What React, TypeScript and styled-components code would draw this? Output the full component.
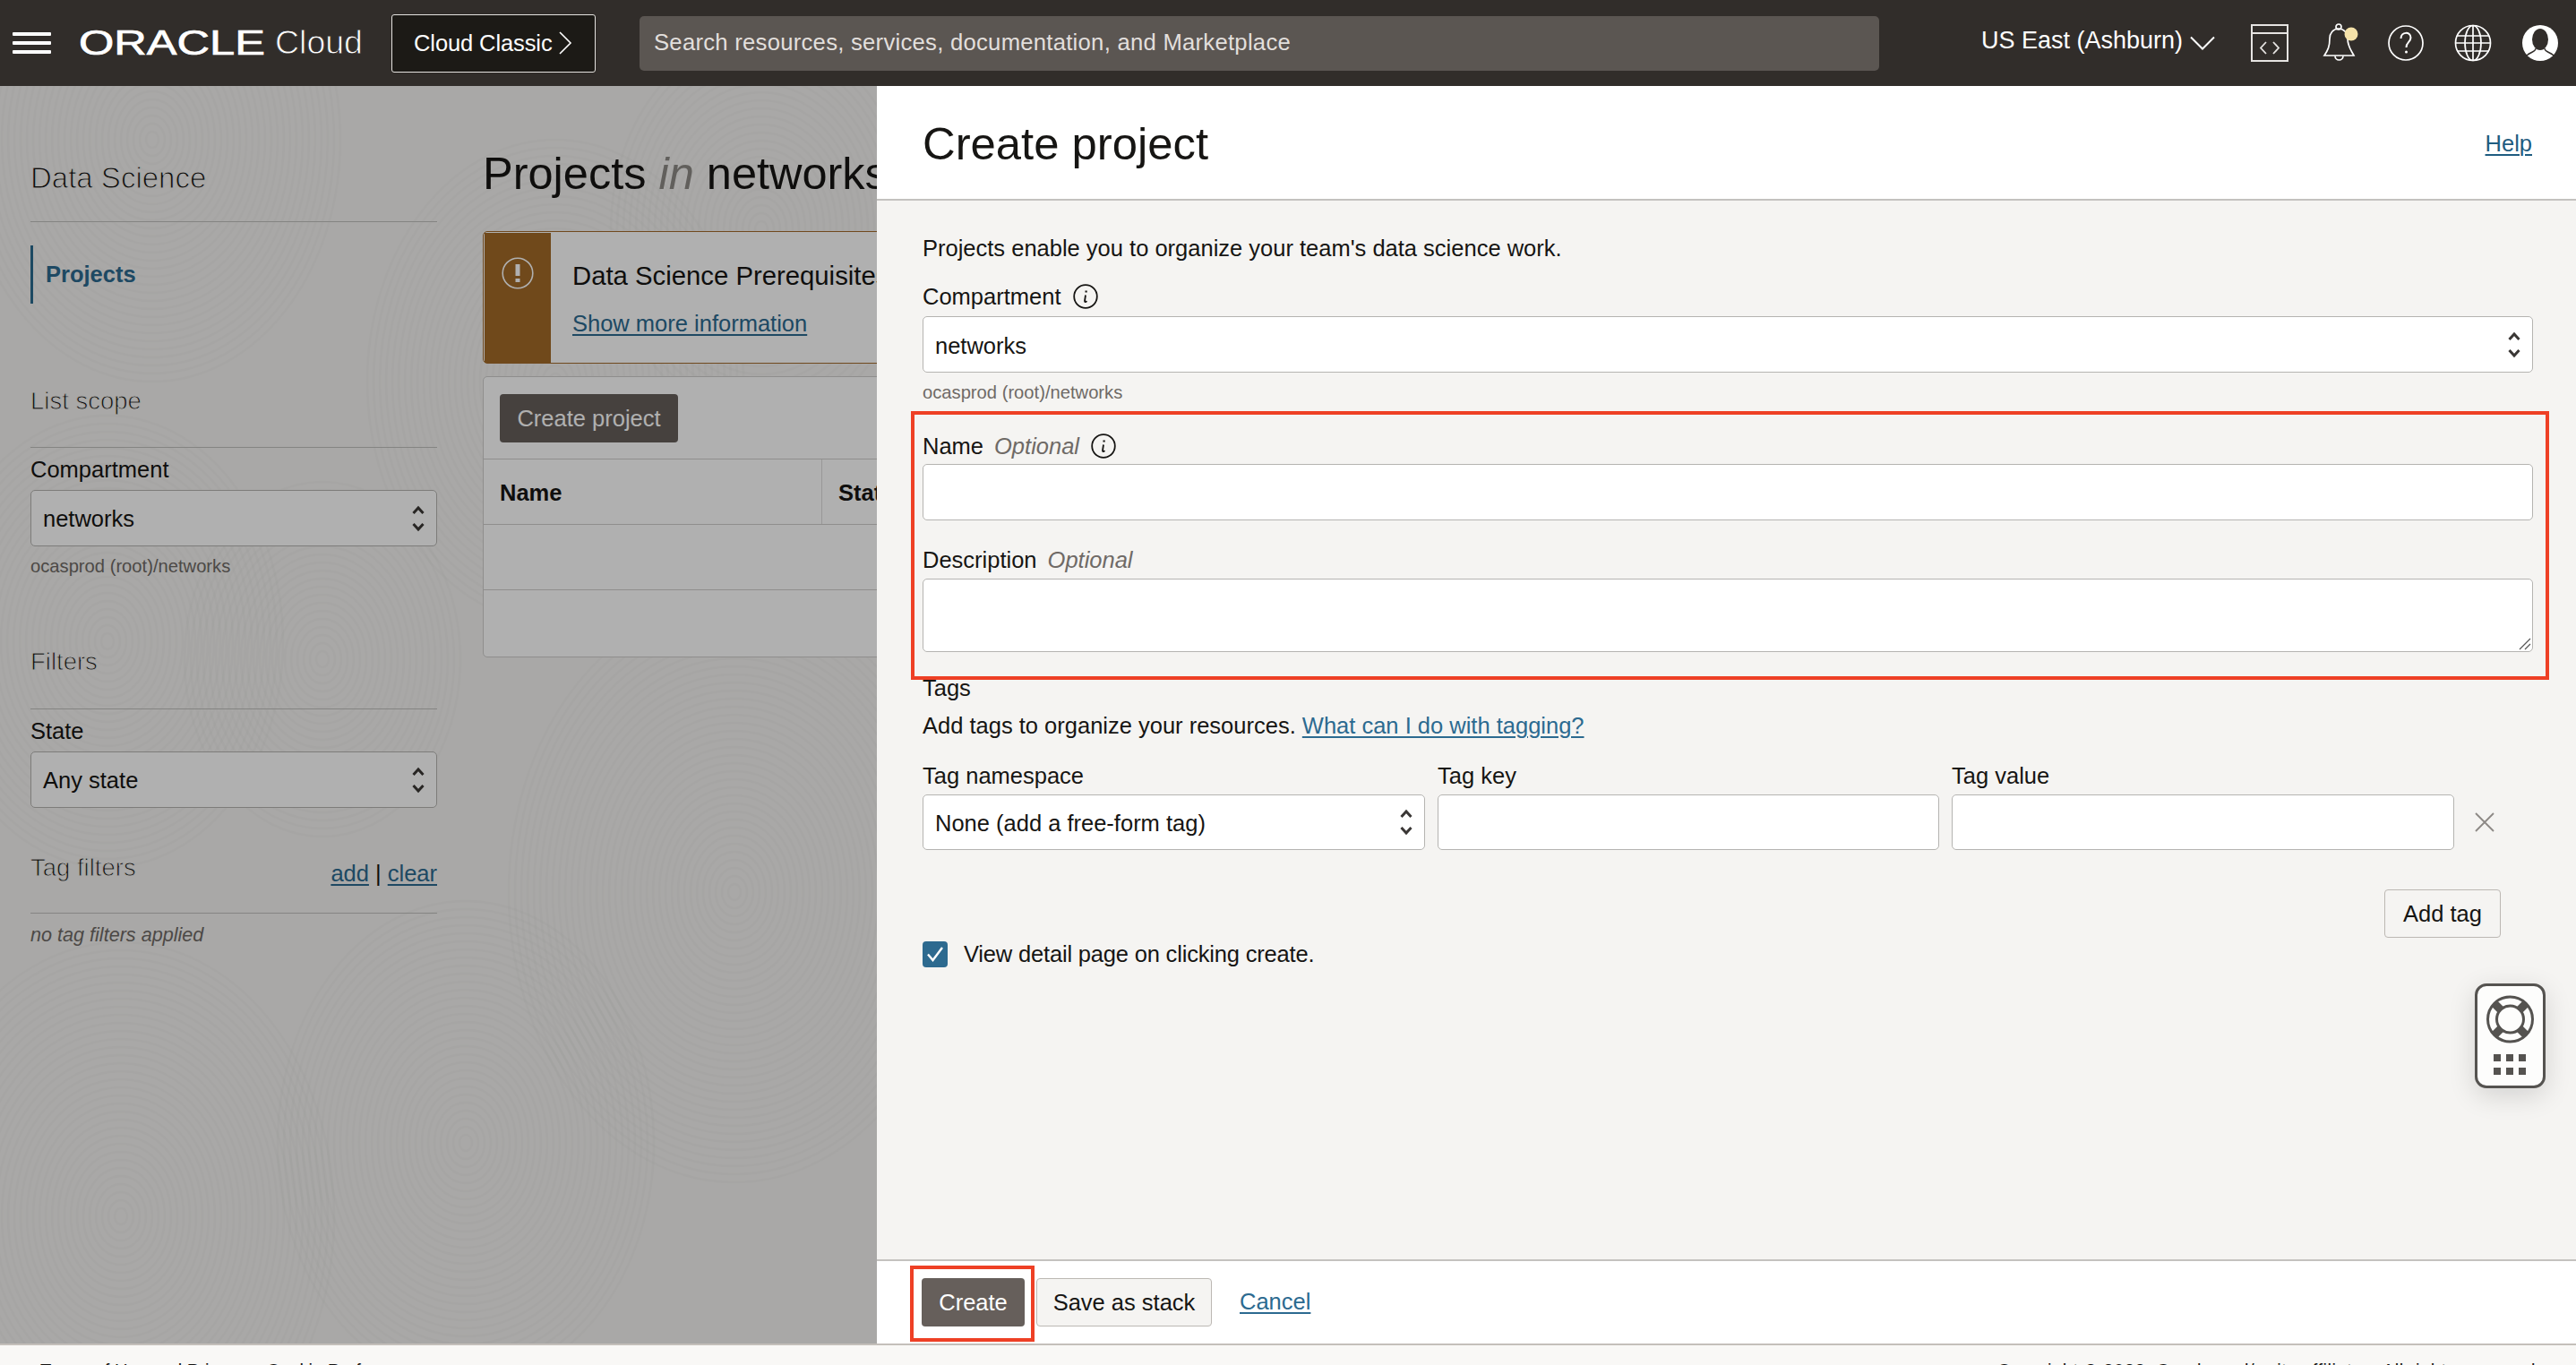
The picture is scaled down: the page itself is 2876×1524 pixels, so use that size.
import React from "react";
import styled, { createGlobalStyle } from "styled-components";

const Global = createGlobalStyle`
  html, body { margin: 0; padding: 0; width: 2876px; height: 1524px; overflow: hidden; }
  body { font-family: "Liberation Sans", Arial, sans-serif; font-size: 25.5px; color: #161513; }
  * { box-sizing: border-box; }
`;

const Shell = styled.div`
  position: relative;
  width: 2876px;
  height: 1524px;
  display: flex;
  flex-direction: column;
  overflow: hidden;
`;

/* ---------- top bar ---------- */
const TopBar = styled.header`
  flex: 0 0 96px;
  background: #312d2a;
  display: flex;
  align-items: center;
  color: #fff;
  padding-left: 14px;
`;
const Burger = styled.div`
  width: 43px;
  display: flex;
  flex-direction: column;
  gap: 6px;
  margin-top: -1px;
  span { display: block; height: 4px; background: #fff; border-radius: 1px; }
`;
const LogoWrap = styled.div`
  margin-left: 31px;
  display: flex;
  align-items: center;
  width: 349px;
`;
const LogoMark = styled.span`
  display: inline-block;
  width: 219px;
  font-size: 38px;
  line-height: 40px;
  font-weight: 400;
  transform: scaleX(1.33);
  transform-origin: left center;
  -webkit-text-stroke: 0.7px #fff;
  letter-spacing: 0;
`;
const LogoCloud = styled.span`
  font-size: 37.5px;
  line-height: 40px;
  margin-top: -2px;
  -webkit-text-stroke: 0.9px #312d2a;
`;
const ClassicButton = styled.div`
  width: 228px;
  height: 65px;
  background: #1c1a16;
  border: 1px solid #e4e2df;
  border-radius: 3px;
  display: flex;
  align-items: center;
  padding-left: 24px;
  gap: 6px;
  font-size: 25.5px;
  letter-spacing: -0.1px;
  line-height: 58px;
`;
const SearchBox = styled.div`
  margin-left: 49px;
  width: 1384px;
  height: 61px;
  background: #5b5652;
  border-radius: 5px;
  padding: 0 0 2px 16px;
  display: flex;
  align-items: center;
  color: #e2dfdc;
  font-size: 25.67px;
  letter-spacing: 0.26px;
`;
const RegionPicker = styled.div`
  margin-left: 114px;
  display: flex;
  align-items: center;
  gap: 8px;
  font-size: 27px;
  width: 301px;
  span { margin-top: -5px; }
`;
const TopIcon = styled.svg`
  flex: none;
  display: block;
`;
const BellIcon = styled(TopIcon)`
  margin-left: 4px;
  margin-right: -1px;
`;
const IconRow = styled.div`
  display: flex;
  align-items: center;
  gap: 34px;
`;

/* ---------- page under the scrim ---------- */
const Stage = styled.div`
  position: relative;
  flex: 0 0 1404px;
  background: #f5f4f2;
  display: flex;
  overflow: hidden;
`;
const Texture = styled.svg`
  position: absolute;
  left: 0;
  top: 0;
`;
const Sidebar = styled.aside`
  position: relative;
  width: 454px;
  margin-left: 34px;
  flex: none;
`;
const SideTitle = styled.div`
  margin-top: 83px;
  height: 40px;
  line-height: 40px;
  font-size: 33px;
  color: #161412;
  -webkit-text-stroke: 1px #f5f4f2;
`;
const SideSection = styled.div<{ $top: number }>`
  margin-top: ${(p) => p.$top}px;
  height: 34px;
  line-height: 34px;
  font-size: 27.5px;
  color: #161412;
  -webkit-text-stroke: 0.9px #f5f4f2;
  display: flex;
  justify-content: space-between;
`;
const Rule = styled.div<{ $top: number }>`
  margin-top: ${(p) => p.$top}px;
  height: 1px;
  background: #c0bfbd;
`;
const NavItem = styled.div`
  margin-top: 26px;
  height: 65px;
  border-left: 3px solid #2b6a8f;
  padding-left: 14px;
  display: flex;
  align-items: center;
  font-weight: 700;
  color: #2c6a90;
  font-size: 25.5px;
`;
const SideLabel = styled.div`
  height: 30px;
  line-height: 30px;
  margin-top: 9px;
  margin-bottom: 8px;
  font-size: 25.5px;
`;
const SelectBox = styled.div`
  height: 63px;
  border: 1px solid #b5b4b1;
  border-radius: 5px;
  background: #fff;
  display: flex;
  align-items: center;
  justify-content: space-between;
  padding: 0 12px 0 13px;
  font-size: 25.5px;
  line-height: 30px;
`;
const Helper = styled.div<{ $top: number }>`
  margin-top: ${(p) => p.$top}px;
  height: 24px;
  line-height: 24px;
  font-size: 20.2px;
  color: #6f6a66;
`;
const ItalicHelper = styled(Helper)`
  font-style: italic;
  font-size: 21.6px;
`;
const Link = styled.a`
  color: #2c6a90;
  text-decoration: underline;
  text-decoration-thickness: 2px;
  text-underline-offset: 3px;
`;
const TagActions = styled.span`
  font-size: 25.5px;
  margin-top: 6px;
  -webkit-text-stroke: 0;
  color: #161513;
`;

const Main = styled.main`
  position: relative;
  margin-left: 51px;
  flex: none;
  width: 1500px;
`;
const PageTitle = styled.h1`
  margin: 0;
  margin-top: 68px;
  height: 60px;
  line-height: 60px;
  font-weight: 400;
  font-size: 50.5px;
  white-space: nowrap;
  em { color: #8d8a86; font-style: italic; }
`;
const Banner = styled.div`
  margin-top: 34px;
  height: 148px;
  background: #fff;
  border: 1px solid #a36a2c;
  border-radius: 5px;
  padding: 1px 0 0 1px;
  display: flex;
`;
const BannerStripe = styled.div`
  width: 74px;
  background: #a26a28;
  display: flex;
  justify-content: center;
  padding-top: 27px;
`;
const BannerText = styled.div`
  padding-left: 24px;
  padding-top: 31px;
`;
const BannerTitle = styled.div`
  font-size: 29.3px;
  line-height: 34px;
`;
const BannerLink = styled(Link)`
  display: block;
  margin-top: 21px;
  font-size: 25.5px;
  line-height: 30px;
`;
const TableCard = styled.div`
  margin-top: 14px;
  height: 314px;
  background: #fff;
  border: 1px solid #cfcecc;
  border-radius: 5px;
`;
const CardToolbar = styled.div`
  height: 92px;
  padding: 19px 0 0 18px;
  border-bottom: 1px solid #cfcecc;
`;
const DarkButton = styled.div<{ $w: number; $h: number }>`
  width: ${(p) => p.$w}px;
  height: ${(p) => p.$h}px;
  background: #665f5b;
  color: #fff;
  border-radius: 4px;
  display: flex;
  align-items: center;
  justify-content: center;
  font-size: 25.5px;
`;
const HeadRow = styled.div`
  height: 73px;
  border-bottom: 1px solid #cfcecc;
  display: flex;
  font-weight: 700;
`;
const HeadCell = styled.div<{ $w: number }>`
  width: ${(p) => p.$w}px;
  padding: 2px 0 0 18px;
  display: flex;
  align-items: center;
  border-right: 1px solid #dedddb;
`;
const EmptyRow = styled.div`
  height: 73px;
  border-bottom: 1px solid #cfcecc;
`;

const Scrim = styled.div`
  position: absolute;
  inset: 0;
  background: rgba(0, 0, 0, 0.31);
`;

/* ---------- drawer ---------- */
const Drawer = styled.section`
  position: absolute;
  left: 979px;
  top: 0;
  bottom: 0;
  right: 0;
  display: flex;
  flex-direction: column;
  background: #f5f4f2;
`;
const DrawerHead = styled.div`
  flex: 0 0 128px;
  background: #fff;
  border-bottom: 2px solid #c4c2bf;
  padding: 0 49px 0 51px;
  display: flex;
  align-items: center;
  justify-content: space-between;
`;
const DrawerTitle = styled.h2`
  margin: 0;
  font-weight: 400;
  font-size: 50.8px;
  margin-top: 2px;
`;
const HelpLink = styled(Link)`
  color: #1f5c80;
  margin-top: 3px;
`;
const DrawerBody = styled.div`
  flex: 1;
  padding: 38px 48px 0 51px;
`;
const Line = styled.div<{ $top: number }>`
  margin-top: ${(p) => p.$top}px;
  height: 30px;
  line-height: 30px;
  display: flex;
  align-items: center;
  white-space: pre;
`;
const Optional = styled.i`
  color: #6f6a66;
  margin-left: 12px;
`;
const InfoIcon = styled.svg<{ $gap: number }>`
  margin-left: ${(p) => p.$gap}px;
  flex: none;
`;
const FieldBox = styled.div<{ $top: number; $h: number }>`
  position: relative;
  margin-top: ${(p) => p.$top}px;
  height: ${(p) => p.$h}px;
  background: #fff;
  border: 1px solid #b5b4b1;
  border-radius: 5px;
`;
const SelectField = styled(SelectBox)<{ $top: number; $h: number }>`
  margin-top: ${(p) => p.$top}px;
  height: ${(p) => p.$h}px;
  & > span { margin-top: 2px; }
`;
const Grip = styled.svg`
  position: absolute;
  right: 1px;
  bottom: 1px;
`;
const TagGrid = styled.div`
  margin-top: 26px;
  display: grid;
  grid-template-columns: 561px 560px 561px 1fr;
  column-gap: 14px;
  row-gap: 6px;
  align-items: center;
`;
const TagLabel = styled.div`
  height: 30px;
  line-height: 30px;
`;
const TagBox = styled.div`
  height: 62px;
  background: #fff;
  border: 1px solid #b5b4b1;
  border-radius: 5px;
`;
const RemoveIcon = styled.svg`
  margin-left: 8px;
`;
const AddTagRow = styled.div`
  margin-top: 44px;
  padding-right: 36px;
  display: flex;
  justify-content: flex-end;
`;
const GhostButton = styled.div<{ $w: number; $h: number }>`
  width: ${(p) => p.$w}px;
  height: ${(p) => p.$h}px;
  border: 1px solid #bcb8b3;
  border-radius: 4px;
  background: #f5f4f2;
  display: flex;
  align-items: center;
  justify-content: center;
  font-size: 25.5px;
`;
const CheckRow = styled.div`
  margin-top: 3px;
  height: 30px;
  display: flex;
  align-items: center;
  gap: 18px;
  letter-spacing: -0.18px;
`;
const CheckBox = styled.div`
  width: 28px;
  height: 29px;
  background: #2d6a8f;
  border-radius: 4px;
  display: flex;
  align-items: center;
  justify-content: center;
`;
const DrawerFoot = styled.div`
  flex: 0 0 94px;
  background: #fff;
  border-top: 2px solid #c4c2bf;
  padding: 19px 0 0 50px;
  display: flex;
  align-items: flex-start;
`;
const CancelLink = styled(Link)`
  margin: 12px 0 0 31px;
`;
const SaveButton = styled(GhostButton)`
  margin-left: 13px;
`;
const HelpWidget = styled.div`
  position: absolute;
  left: 2763px;
  top: 1098px;
  width: 79px;
  height: 117px;
  background: #fdfdfc;
  border: 3px solid #555350;
  border-radius: 13px;
  box-shadow: 0 8px 30px rgba(0, 0, 0, 0.14);
`;
const WidgetArt = styled.svg`
  display: block;
`;
const Annotation = styled.div<{ $l: number; $t: number; $w: number; $h: number }>`
  position: absolute;
  left: ${(p) => p.$l}px;
  top: ${(p) => p.$t}px;
  width: ${(p) => p.$w}px;
  height: ${(p) => p.$h}px;
  border: 4px solid #ee4025;
  pointer-events: none;
`;

/* ---------- page footer ---------- */
const PageFoot = styled.footer`
  flex: 0 0 24px;
  background: #f9f8f6;
  border-top: 2px solid #c4bfba;
  padding: 16px 39px 0 45px;
  display: flex;
  justify-content: space-between;
  font-size: 20.2px;
  line-height: 24px;
  white-space: pre;
  color: #161513;
  overflow: hidden;
`;
const Copyright = styled.span`
  letter-spacing: 0.5px;
`;

/* ---------- drawings ---------- */
const Updown = () => (
  <svg width="16" height="32" viewBox="0 0 16 32" fill="none" stroke="#3a3735" strokeWidth="3">
    <path d="M2.500 10 8 4l5.500 6" />
    <path d="M2.500 22 8 28l5.500-6" />
  </svg>
);
const Info = ({ gap }: { gap: number }) => (
  <InfoIcon $gap={gap} width="28" height="28" viewBox="0 0 28 28" fill="none" stroke="#161513">
    <circle cx="14" cy="14" r="12.800" strokeWidth="1.800" />
    <path d="M14.600 7.500v2" strokeWidth="2.200" />
    <path d="M14 12.500l-1 6.500c-.2 1.300 1 1.700 2.400.2" strokeWidth="1.800" />
  </InfoIcon>
);

const swirls = [
  { x: 170, y: 60, n: 30 },
  { x: 620, y: 330, n: 30 },
  { x: 120, y: 620, n: 28 },
  { x: 360, y: 640, n: 22 },
  { x: 820, y: 900, n: 36 },
  { x: 135, y: 1262, n: 34 },
  { x: 520, y: 1180, n: 30 },
  { x: 850, y: 160, n: 24 },
];
const Fingerprint = () => (
  <Texture width="979" height="1404" fill="none" stroke="#000" strokeOpacity="0.014" strokeWidth="3">
    {swirls.map((s) =>
      Array.from({ length: s.n }, (_, i) => (
        <ellipse key={`${s.x}-${i}`} cx={s.x} cy={s.y} rx={(i + 1) * 7} ry={(i + 1) * 9} />
      ))
    )}
  </Texture>
);

const Lifebuoy = () => (
  <WidgetArt width="73" height="110" viewBox="0 0 73 110">
    <circle cx="36.500" cy="37" r="25" fill="none" stroke="#555350" strokeWidth="3" />
    <circle cx="36.500" cy="37" r="15" fill="none" stroke="#555350" strokeWidth="3" />
    <g stroke="#555350" strokeWidth="9">
      <path d="M19 19.500 26 26.500M54 19.500 47 26.500M19 54.500 26 47.500M54 54.500 47 47.500" />
    </g>
    {[18, 32, 46].map((x) =>
      [76, 91].map((y) => <rect key={`${x}${y}`} x={x} y={y} width="8" height="8" fill="#555350" />)
    )}
  </WidgetArt>
);

export default function App() {
  return (
    <Shell>
      <Global />
      <TopBar>
        <Burger>
          <span />
          <span />
          <span />
        </Burger>
        <LogoWrap>
          <LogoMark>ORACLE</LogoMark>
          <LogoCloud>Cloud</LogoCloud>
        </LogoWrap>
        <ClassicButton>
          Cloud Classic
          <TopIcon width="16" height="26" viewBox="0 0 16 26" fill="none" stroke="#fff" strokeWidth="1.600">
            <path d="M2 1l12 12L2 25" />
          </TopIcon>
        </ClassicButton>
        <SearchBox>Search resources, services, documentation, and Marketplace</SearchBox>
        <RegionPicker>
          <span>US East (Ashburn)</span>
          <TopIcon width="28" height="16" viewBox="0 0 28 16" fill="none" stroke="#fff" strokeWidth="2">
            <path d="M1 1.500l13 13 13-13" />
          </TopIcon>
        </RegionPicker>
        <IconRow>
          <TopIcon width="42" height="42" viewBox="0 0 42 42" fill="none" stroke="#e6e4e2" strokeWidth="2">
            <rect x="1" y="1" width="40" height="40" />
            <path d="M1 10h40" />
            <path d="M17 20l-6 6.500 6 6.500M25 20l6 6.500-6 6.500" strokeWidth="1.800" />
          </TopIcon>
          <BellIcon width="40" height="44" viewBox="0 0 40 44" fill="none" stroke="#fff" strokeWidth="1.700">
            <path d="M2 36c4-6 6-10 6-19 0-6 4-11 10-11s10 5 10 11c0 9 4 13 7 19z" />
            <circle cx="18" cy="4" r="3" />
            <path d="M14 36.500a4.500 4.500 0 0 0 9 0" />
            <ellipse cx="32" cy="12" rx="7.500" ry="7.500" fill="#f5e2a9" stroke="none" />
          </BellIcon>
          <TopIcon width="40" height="42" viewBox="0 0 40 42" fill="none" stroke="#fff" strokeWidth="1.700">
            <circle cx="20" cy="21" r="19" />
            <path d="M14.500 16c0-8 11-8 11-1 0 5-5 5-5 11" strokeWidth="2" />
            <circle cx="20.500" cy="31" r="1.500" fill="#fff" stroke="none" />
          </TopIcon>
          <TopIcon width="42" height="42" viewBox="0 0 42 42" fill="none" stroke="#fff" strokeWidth="1.700">
            <circle cx="21" cy="21" r="19.500" />
            <ellipse cx="21" cy="21" rx="9" ry="19.500" />
            <path d="M21 1.500v39M3 13h36M1.500 21h39M3 30h36" />
          </TopIcon>
          <TopIcon width="40" height="42" viewBox="0 0 40 42">
            <circle cx="20" cy="21" r="20" fill="#fff" />
            <ellipse cx="20" cy="17" rx="9" ry="12" fill="#312d2a" />
            <path d="M15 27c0 4-6 4-10 8M25 27c0 4 6 4 10 8" fill="none" stroke="#312d2a" strokeWidth="1.500" />
          </TopIcon>
        </IconRow>
      </TopBar>

      <Stage>
        <Fingerprint />
        <Sidebar>
          <SideTitle>Data Science</SideTitle>
          <Rule $top={28} />
          <NavItem>Projects</NavItem>
          <SideSection $top={92}>List scope</SideSection>
          <Rule $top={34} />
          <SideLabel>Compartment</SideLabel>
          <SelectBox>
            <span>networks</span>
            <Updown />
          </SelectBox>
          <Helper $top={10}>ocasprod (root)/networks</Helper>
          <SideSection $top={78}>Filters</SideSection>
          <Rule $top={35} />
          <SideLabel>State</SideLabel>
          <SelectBox>
            <span>Any state</span>
            <Updown />
          </SelectBox>
          <SideSection $top={50}>
            Tag filters
            <TagActions>
              <Link>add</Link> | <Link>clear</Link>
            </TagActions>
          </SideSection>
          <Rule $top={33} />
          <ItalicHelper $top={12}>no tag filters applied</ItalicHelper>
        </Sidebar>
        <Main>
          <PageTitle>
            Projects <em>in</em> networks
          </PageTitle>
          <Banner>
            <BannerStripe>
              <svg width="36" height="36" viewBox="0 0 36 36" fill="none" stroke="#fff">
                <circle cx="18" cy="18" r="16.800" strokeWidth="1.600" />
                <path d="M18 8v13" strokeWidth="5" />
                <path d="M18 24v4" strokeWidth="5" />
              </svg>
            </BannerStripe>
            <BannerText>
              <BannerTitle>Data Science Prerequisites</BannerTitle>
              <BannerLink>Show more information</BannerLink>
            </BannerText>
          </Banner>
          <TableCard>
            <CardToolbar>
              <DarkButton $w={199} $h={54}>Create project</DarkButton>
            </CardToolbar>
            <HeadRow>
              <HeadCell $w={378}>Name</HeadCell>
              <HeadCell $w={400}>State</HeadCell>
            </HeadRow>
            <EmptyRow />
          </TableCard>
        </Main>
        <Scrim />
        <Drawer>
          <DrawerHead>
            <DrawerTitle>Create project</DrawerTitle>
            <HelpLink>Help</HelpLink>
          </DrawerHead>
          <DrawerBody>
            <Line $top={0}>Projects enable you to organize your team's data science work.</Line>
            <Line $top={24}>
              Compartment
              <Info gap={14} />
            </Line>
            <SelectField $top={7} $h={63}>
              <span>networks</span>
              <Updown />
            </SelectField>
            <Helper $top={10}>ocasprod (root)/networks</Helper>
            <Line $top={33}>
              Name<Optional>Optional</Optional>
              <Info gap={13} />
            </Line>
            <FieldBox $top={5} $h={63} />
            <Line $top={29}>
              Description<Optional>Optional</Optional>
            </Line>
            <FieldBox $top={6} $h={82}>
              <Grip width="16" height="16" viewBox="0 0 16 16" fill="none" stroke="#555" strokeWidth="1.200">
                <path d="M3 15 15 3M9 15l6-6" />
              </Grip>
            </FieldBox>
            <Line $top={25}>Tags</Line>
            <Line $top={12}>
              Add tags to organize your resources.{" "}
              <Link>What can I do with tagging?</Link>
            </Line>
            <TagGrid>
              <TagLabel>Tag namespace</TagLabel>
              <TagLabel>Tag key</TagLabel>
              <TagLabel>Tag value</TagLabel>
              <span />
              <SelectField $top={0} $h={62}>
                <span>None (add a free-form tag)</span>
                <Updown />
              </SelectField>
              <TagBox />
              <TagBox />
              <RemoveIcon width="24" height="24" viewBox="0 0 24 24" stroke="#8c8885" strokeWidth="1.800">
                <path d="M2 2l20 20M22 2 2 22" />
              </RemoveIcon>
            </TagGrid>
            <AddTagRow>
              <GhostButton $w={130} $h={54}>Add tag</GhostButton>
            </AddTagRow>
            <CheckRow>
              <CheckBox>
                <svg width="20" height="18" viewBox="0 0 20 18" fill="none" stroke="#fff" strokeWidth="2.400">
                  <path d="M2 9.500 7.500 16 18 2" />
                </svg>
              </CheckBox>
              View detail page on clicking create.
            </CheckRow>
          </DrawerBody>
          <DrawerFoot>
            <DarkButton $w={115} $h={54}>Create</DarkButton>
            <SaveButton $w={196} $h={54}>Save as stack</SaveButton>
            <CancelLink>Cancel</CancelLink>
          </DrawerFoot>
        </Drawer>
      </Stage>

      <PageFoot>
        <span>Terms of Use and Privacy    Cookie Preferences</span>
        <Copyright>Copyright © 2023, Oracle and/or its affiliates. All rights reserved.</Copyright>
      </PageFoot>

      <HelpWidget>
        <Lifebuoy />
      </HelpWidget>
      <Annotation $l={1017} $t={459} $w={1829} $h={300} />
      <Annotation $l={1016} $t={1413} $w={139} $h={85} />
    </Shell>
  );
}
